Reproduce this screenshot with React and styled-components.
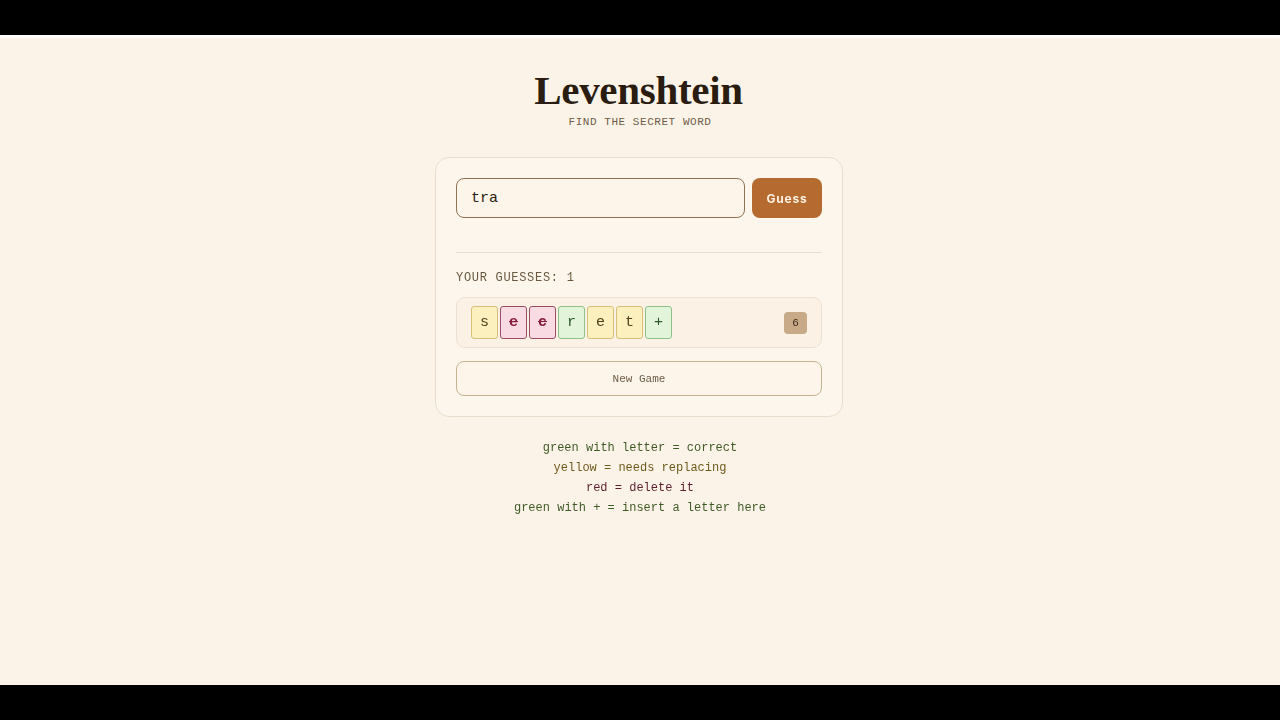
import React, { useState } from 'react';
import styled, { createGlobalStyle } from 'styled-components';

const GlobalStyle = createGlobalStyle`
  * { box-sizing: border-box; }
  body {
    margin: 0;
    background: #000;
    font-family: "Liberation Mono", "DejaVu Sans Mono", monospace;
  }
`;

const tileColors = {
  yellow: { bg: '#fcf0bf', border: '#d6bf78', color: '#4f3f1a' },
  red: { bg: '#f9dce3', border: '#9c4d66', color: '#8a1c3e' },
  green: { bg: '#e2f5da', border: '#8fc08a', color: '#2a5527' },
};

const legendColors = {
  green: '#3f5a25',
  yellow: '#6e5a1c',
  red: '#5b1f2d',
};

const App = () => {
  const [value, setValue] = useState('tra');
  const guesses = [
    {
      tiles: [
        { ch: 's', kind: 'yellow' },
        { ch: 'e', kind: 'red' },
        { ch: 'c', kind: 'red' },
        { ch: 'r', kind: 'green' },
        { ch: 'e', kind: 'yellow' },
        { ch: 't', kind: 'yellow' },
        { ch: '+', kind: 'green' },
      ],
      distance: 6,
    },
  ];

  return (
    <Frame>
      <GlobalStyle />
      <TopBar />
      <Main>
        <Title>Levenshtein</Title>
        <Subtitle>FIND THE SECRET WORD</Subtitle>
        <Card>
          <InputRow onSubmit={(e) => e.preventDefault()}>
            <WordInput
              autoFocus
              value={value}
              onChange={(e) => setValue(e.target.value)}
            />
            <GuessButton type="submit">Guess</GuessButton>
          </InputRow>
          <Divider />
          <SectionLabel>YOUR GUESSES: {guesses.length}</SectionLabel>
          {guesses.map((g, i) => (
            <GuessRow key={i}>
              <Tiles>
                {g.tiles.map((t, j) => (
                  <Tile key={j} $kind={t.kind}>
                    {t.kind === 'red' ? <s>{t.ch}</s> : t.ch}
                  </Tile>
                ))}
              </Tiles>
              <Badge>{g.distance}</Badge>
            </GuessRow>
          ))}
          <NewGameButton type="button">New Game</NewGameButton>
        </Card>
        <Legend>
          <LegendLine $kind="green">green with letter = correct</LegendLine>
          <LegendLine $kind="yellow">yellow = needs replacing</LegendLine>
          <LegendLine $kind="red">red = delete it</LegendLine>
          <LegendLine $kind="green">green with + = insert a letter here</LegendLine>
        </Legend>
      </Main>
      <BottomBar />
    </Frame>
  );
};

const Frame = styled.div`
  height: 720px;
  display: flex;
  flex-direction: column;
  overflow: hidden;
`;

const TopBar = styled.div`
  height: 38px;
  flex-shrink: 0;
  background: #000;
  border-bottom: 3px solid #fff;
  box-shadow: 0 1px 0 #e4dfd6;
`;

const BottomBar = styled.div`
  height: 35px;
  flex-shrink: 0;
  background: #000;
`;

const Main = styled.main`
  flex: 1;
  background: #fcf3e8;
  display: flex;
  flex-direction: column;
  align-items: center;
  padding-top: 28px;
`;

const Title = styled.h1`
  margin: 0 0 0 -3px;
  font-family: "Liberation Serif", "DejaVu Serif", serif;
  font-weight: 700;
  font-size: 41px;
  line-height: 48px;
  letter-spacing: -0.3px;
  color: #2a1c10;
`;

const Subtitle = styled.div`
  margin-top: 2px;
  font-size: 11px;
  letter-spacing: 0.55px;
  color: #6d5c47;
`;

const Card = styled.div`
  margin: 29px 2px 0 0;
  width: 408px;
  padding: 20px;
  background: #fdf6ec;
  border: 1px solid #e8dece;
  border-radius: 14px;
  display: flex;
  flex-direction: column;
`;

const InputRow = styled.form`
  display: flex;
  gap: 7px;
  margin: 0;
`;

const WordInput = styled.input`
  flex: 1;
  height: 40px;
  padding: 0 14px;
  border: 1.5px solid #8c7354;
  border-radius: 8px;
  background: #fdf5ea;
  font-family: "Liberation Mono", monospace;
  font-size: 15px;
  color: #2a1c10;
  outline: none;
  caret-color: #2a1c10;
`;

const GuessButton = styled.button`
  width: 70px;
  height: 40px;
  border: none;
  border-radius: 8px;
  background: #b56b2f;
  color: #fdf1e4;
  font-family: Inter, "Noto Sans", sans-serif;
  font-weight: 700;
  font-size: 12px;
  letter-spacing: 0.8px;
  cursor: pointer;
`;

const Divider = styled.hr`
  margin: 34px 0 0;
  border: none;
  border-top: 1px solid #e6ddcf;
`;

const SectionLabel = styled.div`
  margin-top: 17px;
  font-size: 12px;
  letter-spacing: 0.7px;
  line-height: 16px;
  color: #6a583f;
`;

const GuessRow = styled.div`
  margin-top: 11px;
  height: 51px;
  display: flex;
  align-items: center;
  justify-content: space-between;
  padding: 0 14px;
  border: 1px solid #ebe1d2;
  border-radius: 9px;
  background: #fbf1e5;
`;

const Tiles = styled.div`
  display: flex;
  gap: 2px;
`;

const Tile = styled.div`
  width: 27px;
  height: 33px;
  display: flex;
  align-items: center;
  justify-content: center;
  border-radius: 3px;
  font-size: 15px;
  background: ${(p) => tileColors[p.$kind].bg};
  border: 1px solid ${(p) => tileColors[p.$kind].border};
  color: ${(p) => tileColors[p.$kind].color};
  font-weight: ${(p) => (p.$kind === 'red' ? 700 : 400)};
`;

const Badge = styled.div`
  width: 23px;
  height: 22px;
  display: flex;
  align-items: center;
  justify-content: center;
  border-radius: 4px;
  background: #c8aa89;
  color: #3f2c18;
  font-size: 11px;
`;

const NewGameButton = styled.button`
  margin-top: 13px;
  height: 35px;
  border: 1.5px solid #c4b390;
  border-radius: 8px;
  background: #fdf5ea;
  font-family: "Liberation Mono", monospace;
  font-size: 11px;
  color: #6d5c47;
  cursor: pointer;
`;

const Legend = styled.div`
  margin-top: 21px;
  display: flex;
  flex-direction: column;
  align-items: center;
`;

const LegendLine = styled.div`
  font-size: 12px;
  line-height: 20px;
  color: ${(p) => legendColors[p.$kind]};
`;

export default App;
